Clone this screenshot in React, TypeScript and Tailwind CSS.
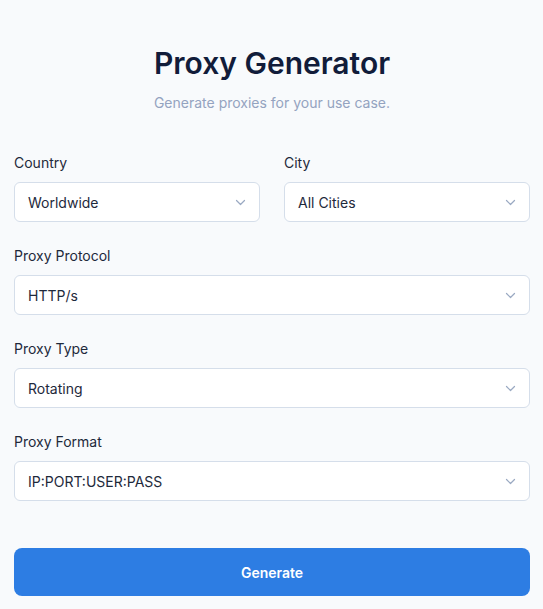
import React from 'react'

const Chevron = () => (
  <svg width="11" height="7" viewBox="0 0 11 7" fill="none" className="shrink-0">
    <path d="M1.5 1.5l4 4 4-4" stroke="#9aa9c2" strokeWidth="1.2" strokeLinecap="round" strokeLinejoin="round" />
  </svg>
)

const Field = ({ label, value }: { label: string; value: string }) => (
  <div className="flex flex-col">
    <label className="text-[14px] leading-[20px] text-[#1e293b] mb-[9px]">{label}</label>
    <button className="h-[40px] w-full flex items-center justify-between rounded-[6px] border border-[#d5deea] bg-white pl-[13px] pr-[13px] text-left text-[14px] text-[#1e293b]">
      <span>{value}</span>
      <Chevron />
    </button>
  </div>
)

export default function App() {
  return (
    <div
      className="min-h-[609px] bg-[#f8fafc] pl-[14px] pr-[13px] pt-[43px]"
      style={{ fontFamily: 'Inter, "Noto Sans", sans-serif' }}
    >
      <h1 className="text-center text-[30px] leading-[40px] font-semibold text-[#111c3a]">
        Proxy Generator
      </h1>
      <p className="mt-[10px] text-center text-[14px] leading-[20px] text-[#94a3c0]">
        Generate proxies for your use case.
      </p>

      <div className="mt-[40px] flex flex-col gap-[24px]">
        <div className="grid grid-cols-2 gap-6">
          <Field label="Country" value="Worldwide" />
          <Field label="City" value="All Cities" />
        </div>
        <Field label="Proxy Protocol" value="HTTP/s" />
        <Field label="Proxy Type" value="Rotating" />
        <Field label="Proxy Format" value="IP:PORT:USER:PASS" />
      </div>

      <button className="mt-[47px] h-[48px] w-full rounded-[8px] bg-[#2d7de3] text-[14px] font-semibold text-white">
        Generate
      </button>
    </div>
  )
}
